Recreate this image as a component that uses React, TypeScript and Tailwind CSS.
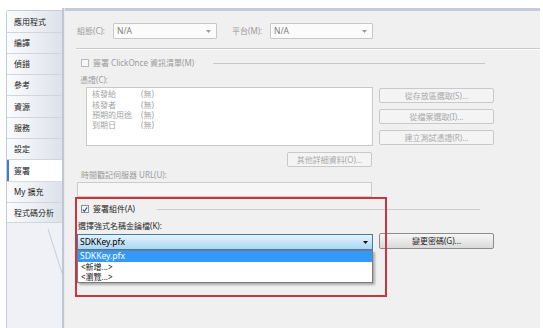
import React from "react";

const tabs: [string, number][] = [
  ["應用程式", 22],
  ["編譯", 21],
  ["偵錯", 21],
  ["參考", 21],
  ["資源", 22],
  ["服務", 21],
  ["設定", 21],
  ["簽署", 22],
  ["My 擴充", 21],
  ["程式碼分析", 20],
];

const certRows = [
  ["核發給", "(無)"],
  ["核發者", "(無)"],
  ["預期的用途", "(無)"],
  ["到期日", "(無)"],
];

function Arrow({ color }: { color: string }) {
  return (
    <svg width="5" height="3" viewBox="0 0 5 3" className="shrink-0">
      <polygon points="0,0 5,0 2.5,3" fill={color} />
    </svg>
  );
}

function NaCombo({ w }: { w: string }) {
  return (
    <div
      className={`${w} h-[16px] border border-[#c8c8c8] bg-[#fbfbfb] rounded-[1px] flex items-center pl-[3px] pr-[5px]`}
    >
      <span className="flex-1 text-[8.5px] text-[#7c7c7c] leading-none">N/A</span>
      <Arrow color="#9a9a9a" />
    </div>
  );
}

function DisabledButton({ label, w }: { label: string; w: string }) {
  return (
    <div
      className={`${w} h-[15px] border border-[#c9c9c9] rounded-[2px] bg-[#f4f4f4] flex items-center justify-center text-[8px] text-[#a9a9a9] leading-none`}
    >
      {label}
    </div>
  );
}

export default function App() {
  return (
    <div className="w-[543px] h-[328px] bg-white overflow-hidden font-['Noto_Sans','Noto_Sans_CJK_TC',sans-serif]">
      <div className="flex h-full pt-[8px] pl-[6px] pr-[3px]">
        {/* Tab column */}
        <div className="w-[56px] mt-[2px] flex flex-col border-l border-t border-[#c6cbd6] rounded-tl-[3px]">
          {tabs.map(([label, h], i) => (
            <div
              key={label}
              className={
                i === 7
                  ? "bg-white shadow-[inset_2px_0_0_#3d7bd6] border-b border-[#d6dae2] flex items-center pl-[7px] text-[8px] text-[#1c1c1c] leading-none"
                  : "bg-gradient-to-r from-[#fbfcfd] to-[#dde1ea] border-b border-[#d0d5df] flex items-center pl-[7px] text-[8px] text-[#1c1c1c] leading-none"
              }
              style={{ height: h }}
            >
              {label}
            </div>
          ))}
          <div className="flex-1 bg-[#eff1f6]">
            <svg width="55" height="60" viewBox="0 0 55 60">
              <line x1="41" y1="6" x2="55" y2="50" stroke="#c9ced8" strokeWidth="1" />
            </svg>
          </div>
        </div>

        {/* divider */}
        <div className="w-[3px] border-l-2 border-[#c0c6d2] bg-[#e6e9ef]" />

        {/* Panel */}
        <div className="w-[475px] relative bg-[#f0f0f0] border-t-[3px] border-[#c5cbd8] flex flex-col text-[8px] leading-none">
          {/* Row 1 */}
          <div className="flex items-center h-[16px] mt-[12px] pl-[12px]">
            <span className="w-[36px] text-[#9b9b9b]">組態(C):</span>
            <NaCombo w="w-[104px]" />
            <span className="w-[38px] ml-[15px] text-[#9b9b9b]">平台(M):</span>
            <NaCombo w="w-[103px]" />
          </div>

          {/* separator */}
          <div className="mt-[9px] ml-[11px] h-[1px] bg-[#cbcbcb]" />
          <div className="ml-[11px] h-[1px] bg-white" />

          {/* ClickOnce checkbox */}
          <div className="flex items-center h-[10px] mt-[8px] pl-[16px]">
            <div className="w-[8px] h-[8px] border border-[#b9b9b9] bg-[#f7f7f7]" />
            <span className="ml-[4px] text-[#9b9b9b] whitespace-nowrap">簽署 ClickOnce 資訊清單(M)</span>
            <div className="flex-1 h-[1px] bg-[#c8c8c8] ml-[19px] mr-[55px]" />
          </div>

          {/* 憑證 label */}
          <div className="flex items-center h-[12px] mt-[6px] pl-[15px] text-[#9b9b9b]">憑證(C):</div>

          {/* Cert list + buttons */}
          <div className="flex mt-[1px]">
            <div className="ml-[21px] w-[287px] h-[59px] border border-[#c9c9c9] bg-white pt-[1px] pl-[5px]">
              {certRows.map(([k, v]) => (
                <div key={k} className="flex items-center h-[10.4px] text-[#a3a3a3]">
                  <span className="w-[49px]">{k}</span>
                  <span>{v}</span>
                </div>
              ))}
            </div>
            <div className="ml-[6px] flex flex-col gap-[6px] mt-[1px]">
              <DisabledButton w="w-[115px]" label="從存放區選取(S)..." />
              <DisabledButton w="w-[115px]" label="從檔案選取(I)..." />
              <DisabledButton w="w-[115px]" label="建立測試憑證(R)..." />
            </div>
          </div>

          {/* other details button */}
          <div className="mt-[6px] ml-[222px]">
            <DisabledButton w="w-[85px]" label="其他詳細資料(O)..." />
          </div>

          {/* timestamp */}
          <div className="flex items-center h-[12px] mt-[2px] pl-[16px] text-[#9b9b9b]">時間戳記伺服器 URL(U):</div>
          <div className="mt-[1px] ml-[12px] w-[295px] h-[15px] border border-[#cbcbcb] bg-[#f6f6f6]" />

          {/* sign assembly */}
          <div className="flex items-center h-[10px] mt-[7px] pl-[16px]">
            <div className="w-[8px] h-[8px] border border-[#8e8f8f] bg-gradient-to-br from-[#f0f0f0] to-[#ffffff] flex items-center justify-center">
              <svg width="7" height="7" viewBox="0 0 7 7">
                <path d="M1 3.6 L2.8 5.6 L6 1" stroke="#2c4f8e" strokeWidth="1.3" fill="none" />
              </svg>
            </div>
            <span className="ml-[4px] text-[#2a2a2a] whitespace-nowrap">簽署組件(A)</span>
            <div className="flex-1 h-[1px] bg-[#cccccc] ml-[22px] mr-[60px]" />
          </div>

          <div className="flex items-center h-[12px] mt-[6px] pl-[13px] text-[#2a2a2a]">選擇強式名稱金鑰檔(K):</div>

          {/* key combo + change password */}
          <div className="flex items-start mt-[2px]">
            <div className="relative ml-[12px] w-[296px] h-[16px]">
              <div className="w-full h-full border border-[#3c7fb1] bg-gradient-to-b from-[#e6f3fc] to-[#a9d6f2] flex items-center pl-[2px] pr-[4px]">
                <span className="flex-1 text-[8.5px] text-black">SDKKey.pfx</span>
                <Arrow color="#111" />
              </div>
              <div className="absolute left-0 top-full w-[296px] h-[33px] border border-[#7b7b7b] bg-white shadow-[2px_2px_2px_rgba(0,0,0,0.28)] flex flex-col">
                <div className="h-[11px] bg-[#3399ff] text-white text-[8.5px] flex items-center pl-[2px]">SDKKey.pfx</div>
                <div className="h-[10px] text-[#111] flex items-center pl-[3px]">&lt;新增...&gt;</div>
                <div className="h-[10px] text-[#111] flex items-center pl-[3px]">&lt;瀏覽...&gt;</div>
              </div>
            </div>
            <div className="ml-[6px] -mt-[1px] w-[115px] h-[16px] border border-[#8b8b8b] rounded-[2px] bg-gradient-to-b from-[#f7f7f7] to-[#dadada] flex items-center justify-center text-[#222]">
              變更密碼(G)...
            </div>
          </div>

          {/* red annotation rectangle */}
          <div className="absolute left-[10px] top-[186px] w-[312px] h-[100px] border-2 border-[#c9363e] pointer-events-none" />
        </div>
      </div>
    </div>
  );
}
